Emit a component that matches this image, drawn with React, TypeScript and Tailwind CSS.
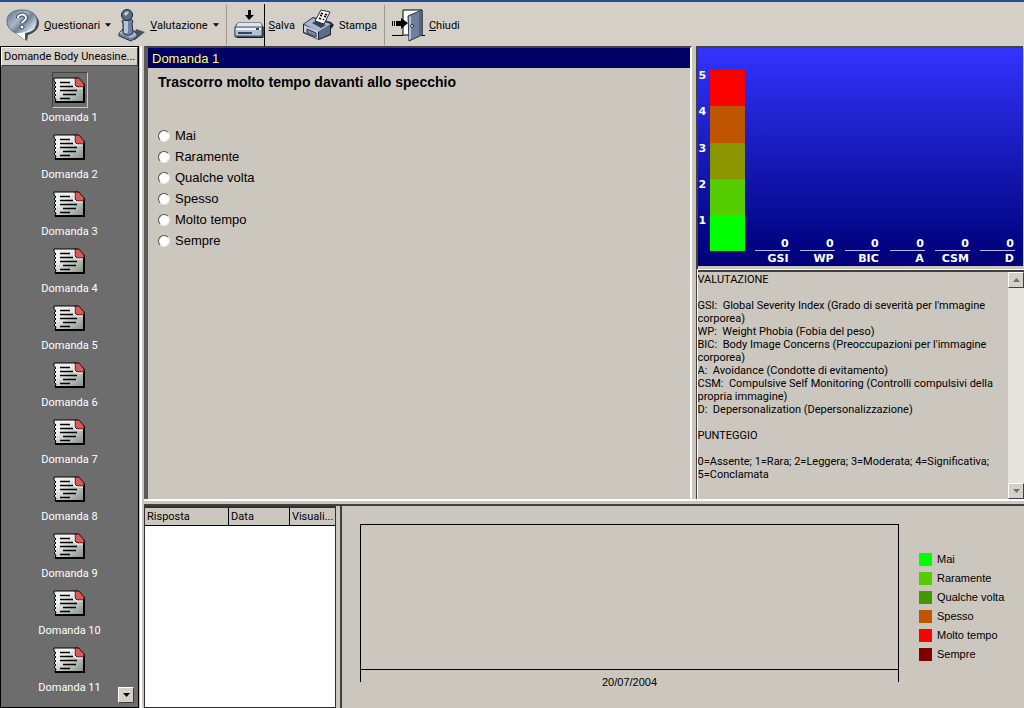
import React, { useState } from 'react';

const ANSWERS = [
  { label: 'Mai', color: 'bg-[#00ff00]' },
  { label: 'Raramente', color: 'bg-[#55cc00]' },
  { label: 'Qualche volta', color: 'bg-[#449900]' },
  { label: 'Spesso', color: 'bg-[#c05500]' },
  { label: 'Molto tempo', color: 'bg-[#ff0000]' },
  { label: 'Sempre', color: 'bg-[#800000]' },
];

const SCALE = [
  { value: 5, color: 'bg-[#ff0000]' },
  { value: 4, color: 'bg-[#c05500]' },
  { value: 3, color: 'bg-[#8a9500]' },
  { value: 2, color: 'bg-[#55cc00]' },
  { value: 1, color: 'bg-[#00ff00]' },
];

const INDEXES = ['GSI', 'WP', 'BIC', 'A', 'CSM', 'D'];

const QUESTIONS = Array.from({ length: 11 }, (_, i) => `Domanda ${i + 1}`);

const LEGEND_TEXT = [
  'VALUTAZIONE',
  '',
  "GSI:  Global Severity Index (Grado di severità per l'mmagine corporea)",
  'WP:  Weight Phobia (Fobia del peso)',
  "BIC:  Body Image Concerns (Preoccupazioni per l'immagine corporea)",
  'A:  Avoidance (Condotte di evitamento)',
  'CSM:  Compulsive Self Monitoring (Controlli compulsivi della propria immagine)',
  'D:  Depersonalization (Depersonalizzazione)',
  '',
  'PUNTEGGIO',
  '',
  '0=Assente; 1=Rara; 2=Leggera; 3=Moderata; 4=Significativa; 5=Conclamata',
].join('\n');

const HelpIcon = () => (
  <svg width="34" height="34" viewBox="0 0 34 34" aria-hidden="true">
    <defs>
      <linearGradient id="bubble" x1="0" y1="0" x2="1" y2="1">
        <stop offset="0" stopColor="#5f6f88" />
        <stop offset="0.35" stopColor="#a9b6ca" />
        <stop offset="0.5" stopColor="#71809a" />
        <stop offset="0.75" stopColor="#dce3ee" />
        <stop offset="1" stopColor="#ffffff" />
      </linearGradient>
    </defs>
    <path d="M20 4c8 1 13 5 13 11 0 6-5 10-11 12l-1 6-7-6z" fill="#44474e" />
    <path d="M16 2C7 2 1 6 1 13c0 6 4 10 9 12l9 7v-7c7-1 12-5 12-12C31 6 25 2 16 2z" fill="url(#bubble)" stroke="#5a6980" />
    <path d="M10 25l9 7v-7c5-1 9-3 11-6-5 4-13 6-20 6z" fill="#fff" />
    <path d="M12 10c0-4 8-5 8 0 0 3-4 3-4 5" fill="none" stroke="#3c4b64" strokeWidth="4" />
    <path d="M12 10c0-4 8-5 8 0 0 3-4 3-4 5" fill="none" stroke="#fff" strokeWidth="2" />
    <circle cx="16" cy="19" r="2" fill="#fff" stroke="#3c4b64" />
  </svg>
);

const PawnIcon = () => (
  <svg width="28" height="34" viewBox="0 0 28 34" aria-hidden="true">
    <path d="M14 31l4-10 9 3-5 4-5 4z" fill="#50545c" />
    <path d="M1 25l4-4h9l5 5v3l-6 4L1 28z" fill="#71809b" stroke="#26324a" />
    <path d="M1 25l4-3h9l5 5-6 3z" fill="#a9b7cb" />
    <path d="M4 13c1-3 9-3 11 0l-1 3 1 9c-2 3-8 3-10 0V16z" fill="#71809b" stroke="#26324a" />
    <path d="M6 13h4v12H6z" fill="#b8c4d6" />
    <circle cx="9" cy="7" r="5.5" fill="#5d6b84" stroke="#1b2436" />
    <path d="M6 6c1-3 4-3 5-2L8 8z" fill="#c5cfde" />
  </svg>
);

const SaveIcon = () => (
  <svg width="30" height="32" viewBox="0 0 30 32" aria-hidden="true">
    <path d="M14 1h3v5h3l-5 5-4-5h3z" fill="#000" />
    <path d="M4 14h23l2 4v10H1V18z" fill="#52627b" stroke="#34435b" />
    <path d="M4 14h23l1 4H2z" fill="#dde4ee" />
    <path d="M1 18h27v9H1z" fill="#b3c0d0" stroke="#4a5970" />
    <path d="M2 19h25v2H2z" fill="#eef2f7" />
    <path d="M4 24h14" stroke="#34435b" strokeWidth="2" />
    <path d="M22 19h3v2h-3z" fill="#34435b" />
    <path d="M3 28.5h26V18" fill="none" stroke="#101825" />
  </svg>
);

const PrintIcon = () => (
  <svg width="33" height="32" viewBox="0 0 33 32" aria-hidden="true">
    <path d="M1 15L11 8l18 5 3 3-3 4v6l-12 5L1 24z" fill="#1b2535" />
    <path d="M2 15l9-6 18 6-12 8z" fill="#a9b7ca" />
    <path d="M2 16l14 6v8L2 23z" fill="#c4cedc" />
    <path d="M17 22l11-6v9l-11 5z" fill="#5d6d87" />
    <path d="M5 20l9 4v4l-9-4z" fill="#7c8ba4" stroke="#2b384f" />
    <path d="M10 14l4-2 10 4-5 3z" fill="#34435b" />
    <path d="M13 12l6-11 9 2-6 12z" fill="#fff" stroke="#202938" />
    <path d="M19 4l2 1m2 0l2 1m-7 0l2 1m2 0l2 1m-7 1l2 1m2 0l1 1" stroke="#000" strokeWidth="1.5" />
  </svg>
);

const DoorIcon = () => (
  <svg width="33" height="34" viewBox="0 0 33 34" aria-hidden="true">
    <path d="M11 2h19v25H11z" fill="#fff" stroke="#000" />
    <path d="M0 27.5h11M28 27.5h5" stroke="#000" />
    <path d="M16 8L30 2v25l-13 6z" fill="#6d7f9a" stroke="#26324a" />
    <path d="M17 9l2-1v23l-2 1z" fill="#b5c2d3" />
    <path d="M30 3v24l-3 1V4z" fill="#53647f" />
    <circle cx="20" cy="18" r="1.5" fill="#fff" stroke="#1b2436" />
    <path d="M0 13h1v5H0zM2 13h1v5H2zM4 13h5v-3l7 5-7 6v-3H4z" fill="#000" />
  </svg>
);

const SheetIcon = () => (
  <svg width="33" height="26" viewBox="0 0 33 26" aria-hidden="true">
    <defs>
      <linearGradient id="paper" x1="0" y1="0" x2="1" y2="1">
        <stop offset="0.3" stopColor="#f0f2f0" />
        <stop offset="1" stopColor="#7f8c82" />
      </linearGradient>
    </defs>
    <path d="M1 1h24l6 6v18H2l1-3-2-2 2-2-2-2 2-2-2-2 2-2-2-2 2-2-2-2z" fill="url(#paper)" stroke="#000" />
    <path d="M31 7v18H2" fill="none" stroke="#000" strokeWidth="2" />
    <path d="M22 1h4l5 6v3h-7l-2-2z" fill="#d85a5a" stroke="#3b0a0a" />
    <path d="M21 2v7l3 2h6" fill="none" stroke="#fff" />
    <path d="M7 5.5h10M7 9.5h13M7 13.5h17M10 17.5h13M7 21.5h10" stroke="#000" strokeWidth="1.5" />
  </svg>
);

const Arrow = ({ up = false, className = '' }: { up?: boolean; className?: string }) => (
  <svg width="7" height="4" viewBox="0 0 7 4" className={className} aria-hidden="true">
    <path d={up ? 'M0 4h7L3.5 0z' : 'M0 0h7L3.5 4z'} fill="currentColor" />
  </svg>
);

const Separator = () => <span className="w-px h-10 bg-[#9c9a94]" />;

type ToolProps = { icon: React.ReactNode; label: React.ReactNode; menu?: boolean };

const ToolButton = ({ icon, label, menu }: ToolProps) => (
  <button type="button" className="flex items-center gap-1">
    {icon}
    <span>{label}</span>
    {menu && <Arrow className="ml-px w-[6px]" />}
  </button>
);

const raised = 'border border-t-white border-l-white border-r-[#404040] border-b-[#404040] bg-[#d4d0c8]';

const App: React.FC = () => {
  const [current, setCurrent] = useState(0);
  const [answer, setAnswer] = useState<string | null>(null);

  return (
    <div className="h-screen flex flex-col overflow-hidden bg-[#cbc7bf] text-black text-[11px] leading-[13px] font-[Roboto,'Liberation_Sans',sans-serif]">
      <header className="shrink-0 h-[46px] flex items-center gap-[7px] bg-[#d4d0c8] border-t-2 border-[#2a4a94] pt-[2px] pl-[6px]">
        <ToolButton icon={<HelpIcon />} label={<><u>Q</u>uestionari</>} menu />
        <ToolButton icon={<PawnIcon />} label={<><u>V</u>alutazione</>} menu />
        <Separator />
        <ToolButton
          icon={<span className="h-[42px] flex items-center border-r border-black"><SaveIcon /></span>}
          label={<><u>S</u>alva</>}
        />
        <ToolButton icon={<PrintIcon />} label={<>Stam<u>p</u>a</>} />
        <Separator />
        <ToolButton icon={<DoorIcon />} label={<><u>C</u>hiudi</>} />
      </header>

      <div className="flex-1 min-h-0 flex">
        <aside className="relative shrink-0 w-[139px] flex flex-col bg-[#6d6d6d] border border-black overflow-hidden">
          <h2 className={`shrink-0 h-[19px] px-[2px] flex items-center whitespace-nowrap ${raised}`}>
            Domande Body Uneasine...
          </h2>
          <nav className="pt-[6px] flex flex-col">
            {QUESTIONS.map((q, i) => (
              <button
                key={q}
                type="button"
                onClick={() => setCurrent(i)}
                className="shrink-0 h-[57px] flex flex-col items-center text-white"
              >
                <span
                  className={`w-9 h-9 mb-[3px] flex items-center justify-center border ${
                    current === i ? 'border-t-[#404040] border-l-[#404040] border-r-[#c8c8c8] border-b-[#c8c8c8]' : 'border-transparent'
                  }`}
                >
                  <SheetIcon />
                </span>
                {q}
              </button>
            ))}
          </nav>
          <button
            type="button"
            aria-label="Scorri"
            className={`absolute right-1 bottom-1 size-4 flex items-center justify-center ${raised}`}
          >
            <Arrow />
          </button>
        </aside>

        <div className="flex-1 min-w-0 flex flex-col border-l-2 border-white ml-px">
          <div className="flex-[455] min-h-0 flex border-b-2 border-white ml-[2px]">
            <main className="flex-[544] min-w-0 border-t-2 border-l-4 border-r-2 border-[#404040] border-l-[#5a5a58] border-r-white">
              <h1 className="h-5 px-1 flex items-center bg-[#000066] text-[#ffff66] text-[13px] font-['Liberation_Sans',sans-serif]">
                Domanda {current + 1}
              </h1>
              <div
                role="radiogroup"
                aria-labelledby="domanda"
                className="px-[10px] pt-[5px] font-['Liberation_Sans',sans-serif]"
              >
                <p id="domanda" className="h-[52px] text-[14px] leading-[18px] font-bold">
                  Trascorro molto tempo davanti allo specchio
                </p>
                {ANSWERS.map(({ label }) => (
                  <label key={label} className="h-[21px] flex items-center gap-[5px] text-[13px]">
                    <input
                      type="radio"
                      name="risposta"
                      checked={answer === label}
                      onChange={() => setAnswer(label)}
                      className="appearance-none size-3 rounded-full bg-white border border-t-[#505050] border-l-[#505050] border-r-[#e8e6e0] border-b-[#e8e6e0] checked:bg-black"
                    />
                    {label}
                  </label>
                ))}
              </div>
            </main>

            <section className="flex-[328] min-w-0 flex flex-col ml-1 border-l-2 border-[#404040]">
              <div className="flex-[220] min-h-0 flex flex-col mr-px border-t-2 border-[#404040] bg-linear-to-b from-[#3333ff] to-[#000077] text-white font-bold text-[11px] leading-[12px] font-['DejaVu_Sans',Verdana,sans-serif]">
                <div className="flex-1 min-h-0 flex pt-[22px] pr-2">
                  <div className="flex flex-col pb-[15px] pl-px">
                    {SCALE.map(({ value, color }) => (
                      <div key={value} className="flex-1 flex">
                        <span className="w-[11px]">{value}</span>
                        <span className={`w-[35px] ${color}`} />
                      </div>
                    ))}
                  </div>
                  <div className="flex-1 flex items-end gap-[10px] pl-[10px]">
                    {INDEXES.map((name) => (
                      <div key={name} className="flex-1 text-right">
                        <div className="pr-px border-b border-[#b8b8ff]">0</div>
                        <div className="h-[15px] pt-[2px] pr-px">{name}</div>
                      </div>
                    ))}
                  </div>
                </div>
              </div>

              <div className="flex-[228] min-h-0 flex mt-1 border-t-2 border-[#404040] outline-1 outline-white">
                <p className="flex-1 pt-px whitespace-pre-wrap overflow-hidden">{LEGEND_TEXT}</p>
                <div className="w-4 flex flex-col justify-between bg-[#e6e3de] text-[#707070]">
                  <button type="button" aria-label="Su" className={`h-4 flex items-center justify-center ${raised}`}>
                    <Arrow up />
                  </button>
                  <button type="button" aria-label="Giù" className={`h-4 flex items-center justify-center ${raised}`}>
                    <Arrow />
                  </button>
                </div>
              </div>
            </section>
          </div>

          <div className="flex-[203] min-h-0 flex mt-[3px] ml-[2px] border-t-2 border-[#404040]">
            <div className="flex-[190] min-w-0 bg-white border border-t-2 border-[#303030]">
              <table className="w-full table-fixed border-collapse text-left">
                <thead>
                  <tr className="h-[18px] bg-[#cbc7bf] border-b border-black">
                    <th className="w-[44%] px-[2px] font-normal border-r border-black">Risposta</th>
                    <th className="w-[32%] px-[2px] font-normal border-r border-black">Data</th>
                    <th className="px-[2px] font-normal whitespace-nowrap">Visuali...</th>
                  </tr>
                </thead>
                <tbody />
              </table>
            </div>

            <section className="flex-[664] min-w-0 flex ml-1 pt-[18px] pl-[18px] border-l-2 border-[#404040] font-['Liberation_Sans',sans-serif]">
              <div className="flex-1 flex flex-col pb-[26px]">
                <div className="flex-1 border border-black" />
                <div className="h-3 pt-[6px] border-x border-black text-center">20/07/2004</div>
              </div>
              <ul className="w-[125px] pl-5 pt-[26px]">
                {ANSWERS.map(({ label, color }) => (
                  <li key={label} className="h-[19px] flex items-center gap-[5px]">
                    <span className={`size-[13px] ${color}`} />
                    {label}
                  </li>
                ))}
              </ul>
            </section>
          </div>
        </div>
      </div>
    </div>
  );
};

export default App;
